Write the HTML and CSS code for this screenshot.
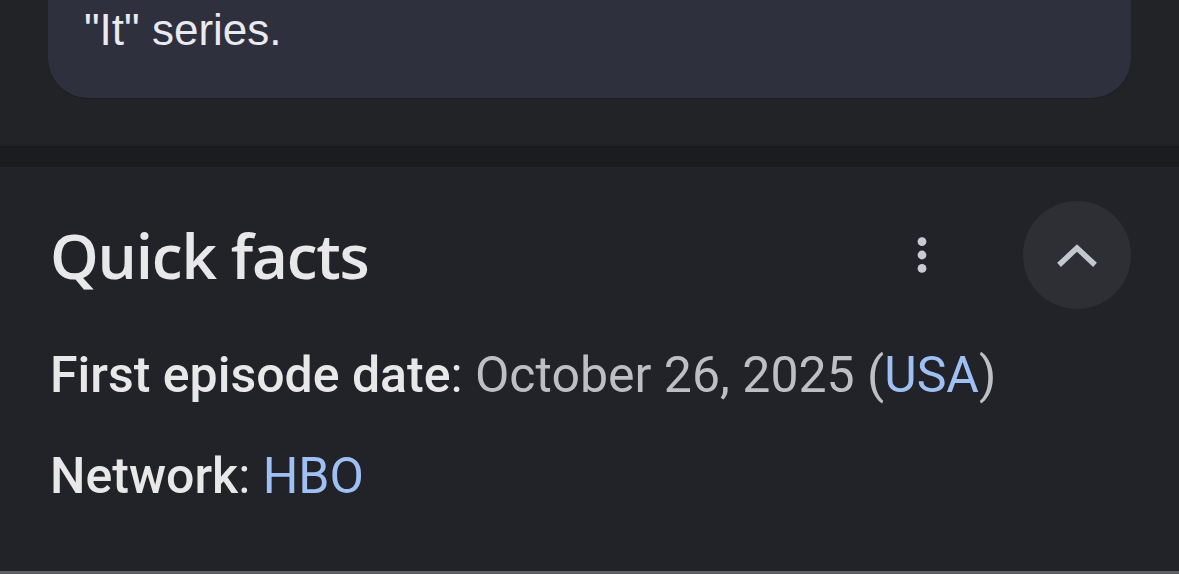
FILE: index.html
```html
<!DOCTYPE html>
<html>
<head>
<meta charset="utf-8">
<link rel="stylesheet" href="styles.css">
</head>
<body>
<div class="top">
  <div class="card"><p class="card-text">"It" series.</p></div>
</div>
<div class="divider"></div>
<section class="facts">
  <div class="facts-head">
    <h2 class="facts-title">Quick facts</h2>
    <div class="head-actions">
      <button class="more" aria-label="More">
        <svg width="14" height="36" viewBox="0 0 14 36"><circle cx="7" cy="4.6" r="4.4" fill="#c9cad3"/><circle cx="7" cy="18" r="4.4" fill="#c9cad3"/><circle cx="7" cy="31.4" r="4.4" fill="#c9cad3"/></svg>
      </button>
      <button class="collapse" aria-label="Collapse">
        <svg width="40" height="24" viewBox="0 0 40 24"><path d="M4 20 L20 5 L36 20" fill="none" stroke="#c4c6d0" stroke-width="5.5" stroke-linecap="square"/></svg>
      </button>
    </div>
  </div>
  <p class="fact"><span class="label">First episode date</span>: <span class="value">October 26, 2025 (<a class="link">USA</a>)</span></p>
  <p class="fact"><span class="label">Network</span>: <a class="link">HBO</a></p>
</section>
</body>
</html>
```
FILE: styles.css
```css
html, body {
  margin: 0;
  padding: 0;
  background: #222328;
  height: 574px;
  overflow: hidden;
}
body {
  font-family: Roboto, "Liberation Sans", sans-serif;
  display: flex;
  flex-direction: column;
}
.top {
  background: #222327;
  height: 146px;
  padding: 0 48px;
  box-sizing: border-box;
}
.card {
  background: #2f303d;
  height: 98px;
  border-radius: 0 0 40px 40px;
  padding: 0 36px;
  box-sizing: border-box;
  box-shadow: 0 1px 0 #1d1e22;
}
.card-text {
  margin: 0;
  padding-top: 5px;
  font-family: "Liberation Sans", Arial, sans-serif;
  font-size: 44px;
  line-height: 50px;
  color: #e9e9f0;
}
.divider {
  height: 21px;
  background: #1b1c20;
  border-top: 1px solid #18191c;
  box-sizing: border-box;
}
.facts {
  flex: 1;
  background: #222328;
  padding: 0 48px 0 50px;
  border-bottom: 3px solid #5e5f63;
}
.facts-head {
  display: flex;
  align-items: center;
  justify-content: space-between;
  height: 176px;
}
.facts-title {
  margin: 0;
  font-family: "Open Sans", sans-serif;
  font-weight: 600;
  font-size: 62px;
  color: #e8e8ea;
  letter-spacing: -1.2px;
}
.head-actions {
  display: flex;
  align-items: center;
  gap: 94px;
}
.more {
  background: none;
  border: 0;
  padding: 0;
  width: 14px;
  height: 36px;
  display: flex;
}
.collapse {
  width: 108px;
  height: 108px;
  border-radius: 50%;
  background: #2e2f35;
  border: 0;
  display: flex;
  align-items: center;
  justify-content: center;
  padding: 0;
}
.fact {
  margin: 2px 0 41px;
  font-size: 50px;
  line-height: 60px;
  color: #e8e8e8;
}
.label {
  font-weight: 500;
}
.value {
  color: #bdbfc3;
}
.link {
  color: #9fc0f4;
}
```
